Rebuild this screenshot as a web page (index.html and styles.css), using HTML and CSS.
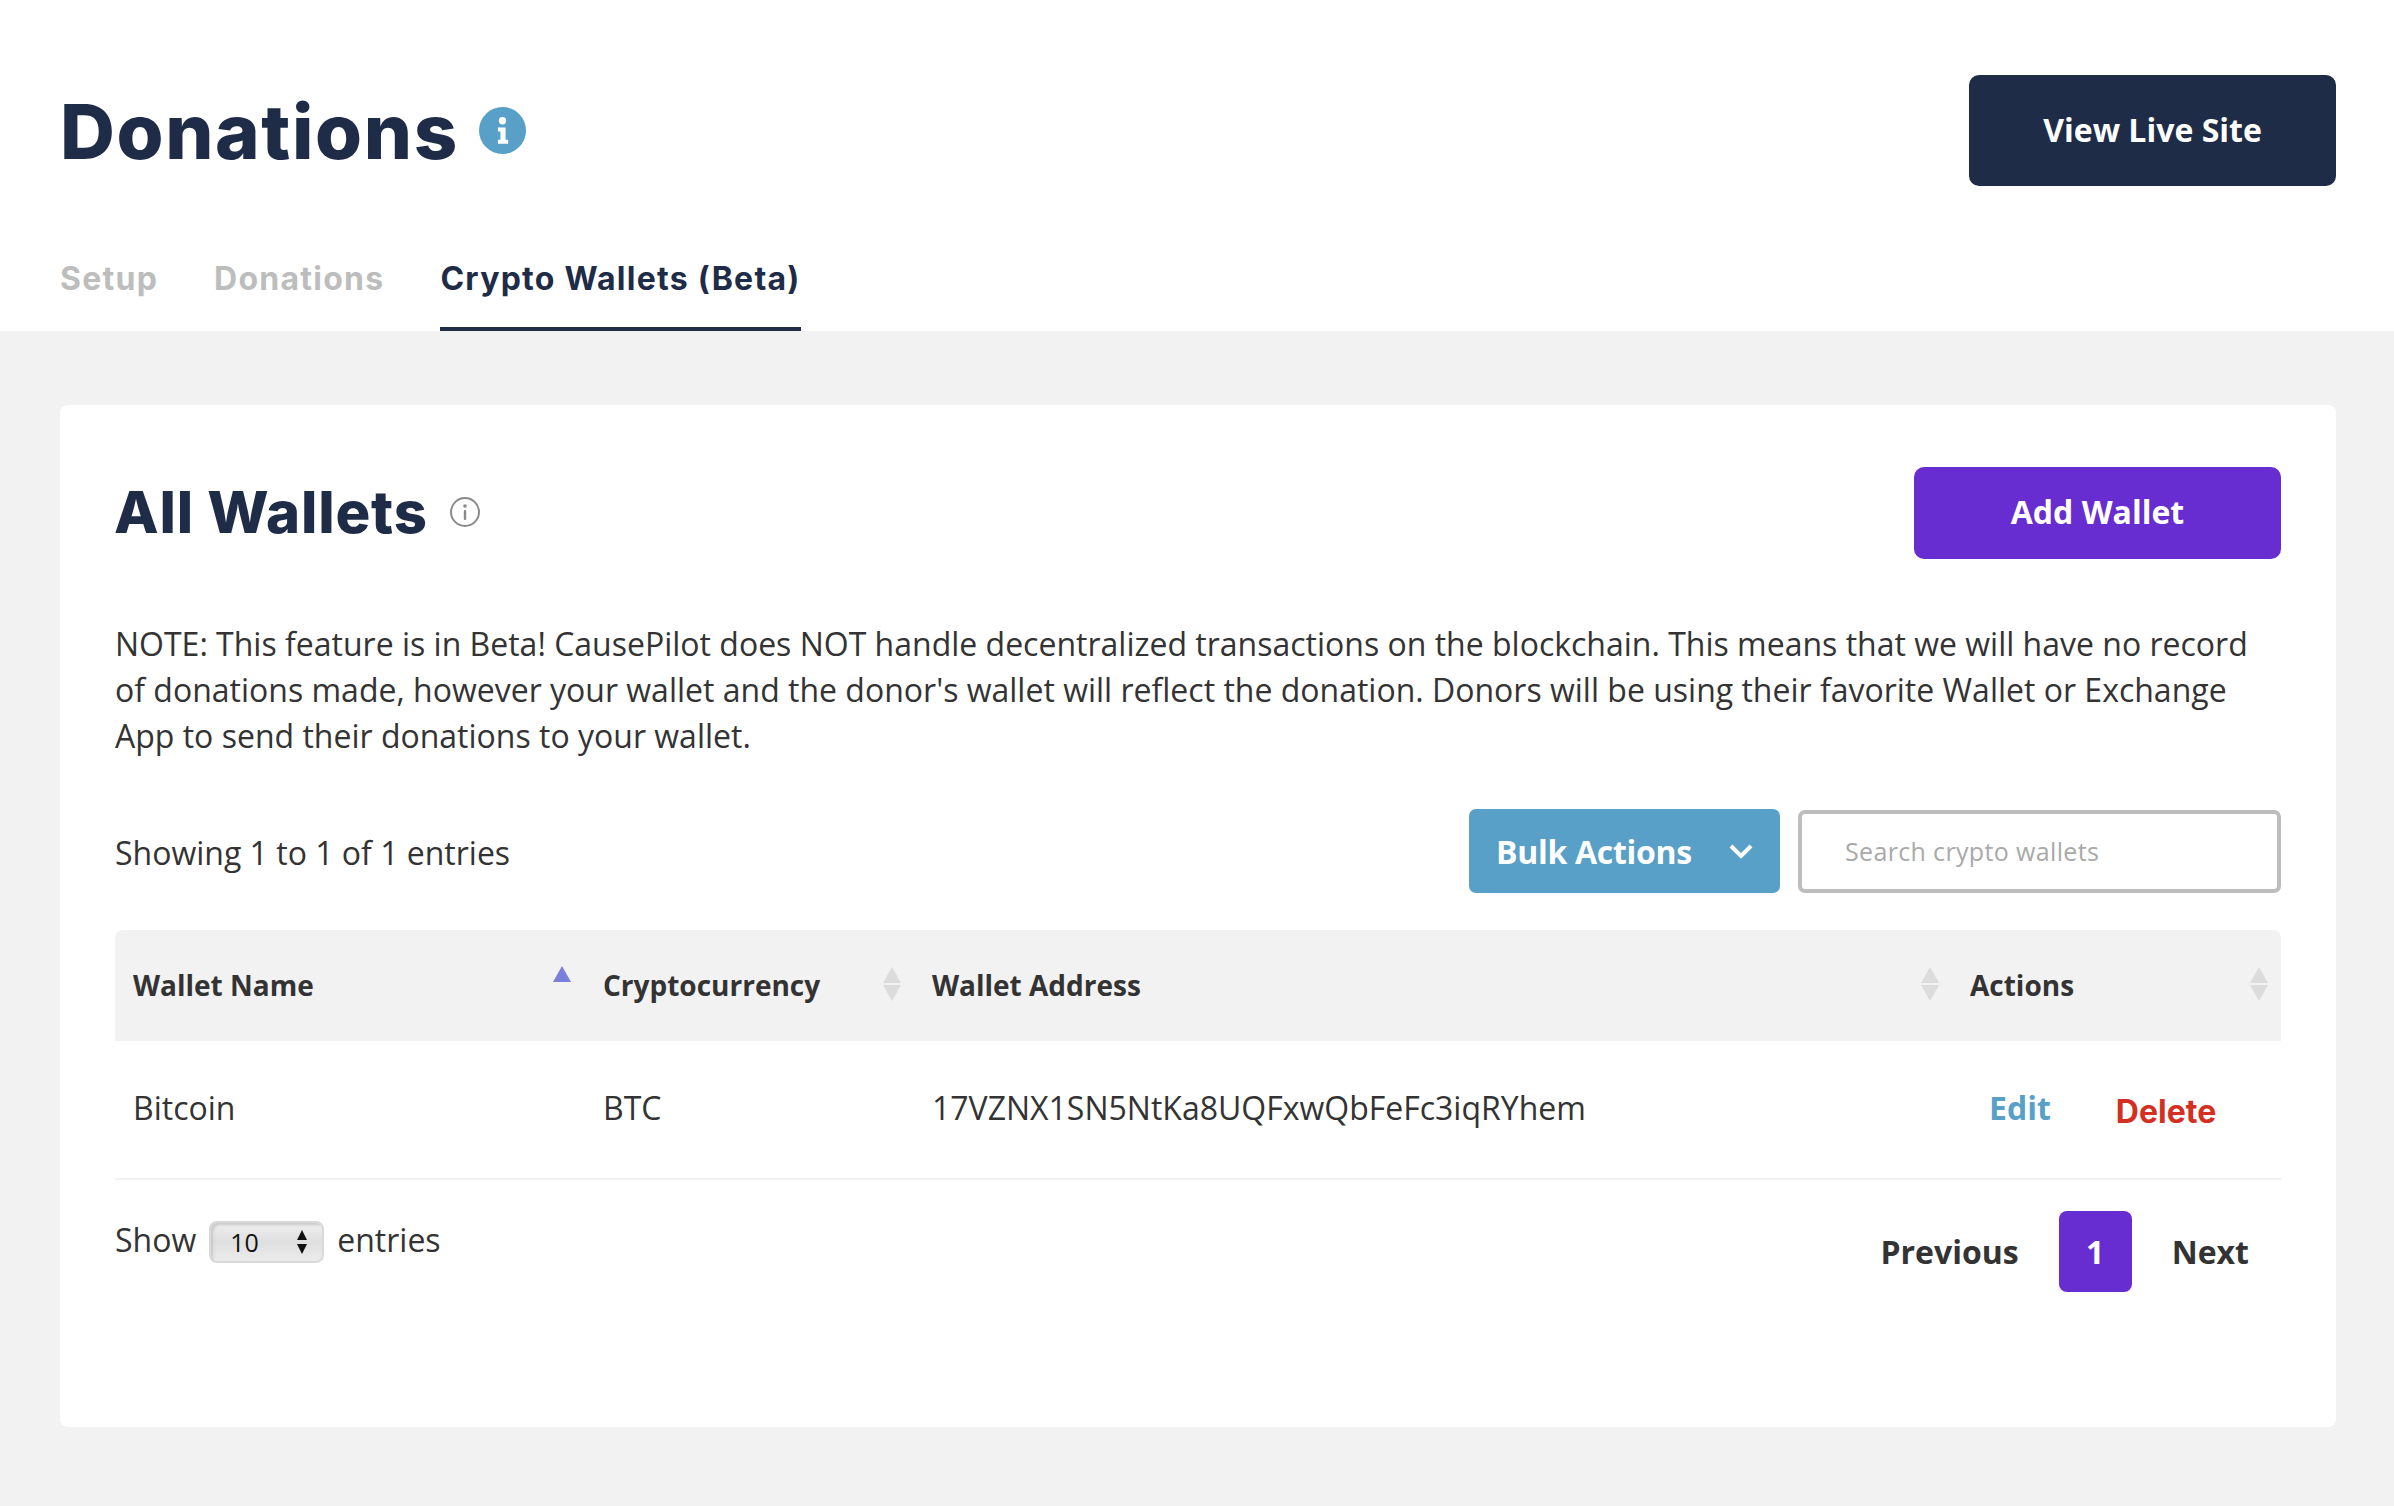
FILE: index.html
```html
<!DOCTYPE html>
<html lang="en">
<head>
<meta charset="utf-8">
<title>Donations</title>
<link rel="stylesheet" href="styles.css">
</head>
<body>
<header class="top">
  <div class="top-row">
    <div class="title-wrap">
      <h1 class="title">Donations</h1>
      <svg class="info-solid" viewBox="0 0 46 46" aria-hidden="true"><circle cx="23" cy="23" r="23" fill="#58a0c8"/><circle cx="23" cy="13.500" r="3.600" fill="#fff"/><path d="M18.500 20h7.500v12h2.500v4h-10v-4h2.500v-8h-2.500z" fill="#fff"/></svg>
    </div>
    <a class="btn-live">View Live Site</a>
  </div>
  <nav class="tabs">
    <a class="tab">Setup</a>
    <a class="tab">Donations</a>
    <a class="tab active">Crypto Wallets (Beta)</a>
  </nav>
</header>
<main class="content">
  <section class="card">
    <div class="card-head">
      <div class="title-wrap small">
        <h2 class="subtitle">All Wallets</h2>
        <svg class="info-line" viewBox="0 0 32 32" aria-hidden="true"><circle cx="16" cy="16" r="14" fill="none" stroke="#8a8a8a" stroke-width="2"/><circle cx="16" cy="10" r="1.800" fill="#8a8a8a"/><rect x="14.800" y="14" width="2.400" height="10" rx="1" fill="#8a8a8a"/></svg>
      </div>
      <a class="btn-add">Add Wallet</a>
    </div>
    <p class="note">NOTE: This feature is in Beta! CausePilot does NOT handle decentralized transactions on the blockchain. This means that we will have no record of donations made, however your wallet and the donor's wallet will reflect the donation. Donors will be using their favorite Wallet or Exchange App to send their donations to your wallet.</p>
    <div class="toolbar">
      <span class="info-text">Showing 1 to 1 of 1 entries</span>
      <div class="tools">
        <a class="btn-bulk">Bulk Actions
          <svg class="chev" viewBox="0 0 24 16" aria-hidden="true"><path d="M2 3l10 10L22 3" fill="none" stroke="#fff" stroke-width="4"/></svg>
        </a>
        <input class="search" type="text" placeholder="Search crypto wallets">
      </div>
    </div>
    <table class="wallets">
      <colgroup><col class="c1"><col class="c2"><col class="c3"><col class="c4"></colgroup>
      <thead>
        <tr>
          <th>Wallet Name<span class="sort sorted"><i class="up"></i></span></th>
          <th>Cryptocurrency<span class="sort"><i class="up"></i><i class="down"></i></span></th>
          <th>Wallet Address<span class="sort"><i class="up"></i><i class="down"></i></span></th>
          <th>Actions<span class="sort"><i class="up"></i><i class="down"></i></span></th>
        </tr>
      </thead>
      <tbody>
        <tr>
          <td>Bitcoin</td>
          <td>BTC</td>
          <td>17VZNX1SN5NtKa8UQFxwQbFeFc3iqRYhem</td>
          <td class="actions"><a class="edit">Edit</a><a class="delete">Delete</a></td>
        </tr>
      </tbody>
    </table>
    <div class="foot">
      <div class="length">
        <span>Show</span>
        <span class="select"><span class="select-val">10</span><svg class="updown" viewBox="0 0 12 26" aria-hidden="true"><path d="M6 1l5 10H1zM6 25L1 15h10z" fill="#111"/></svg></span>
        <span>entries</span>
      </div>
      <div class="pager">
        <a class="page-link">Previous</a>
        <a class="page-num">1</a>
        <a class="page-link">Next</a>
      </div>
    </div>
  </section>
</main>
</body>
</html>
```
FILE: styles.css
```css
* { box-sizing: border-box; }
html, body { margin: 0; padding: 0; }
body {
  background: #f2f2f2;
  font-family: "Open Sans", "Liberation Sans", sans-serif;
  color: #333;
  font-size: 32px;
  height: 1506px;
  overflow: hidden;
}
.top { background: #fff; height: 331px; padding: 75px 58px 0 60px; }
.top-row { display: flex; justify-content: space-between; align-items: flex-start; height: 111px; }
.title-wrap { display: flex; align-items: center; height: 111px; gap: 20px; }
.title {
  margin: 0;
  font-family: Inter, "Liberation Sans", sans-serif;
  font-weight: 800;
  font-size: 76px;
  letter-spacing: 1.600px;
  color: #1f2c47;
  line-height: 1;
}
.info-solid { width: 47px; height: 47px; }
.btn-live {
  width: 367px; height: 111px;
  display: flex; align-items: center; justify-content: center;
  padding-bottom: 3px;
  background: #1f2c47; color: #fff;
  border-radius: 10px;
  font-weight: 700; font-size: 32px;
}
.tabs { display: flex; gap: 56px; margin-top: 52px; height: 93px; }
.tab {
  font-family: Inter, "Liberation Sans", sans-serif;
  font-weight: 700;
  font-size: 32px;
  letter-spacing: 1.250px;
  color: #bdbdbd;
  line-height: 76px;
  height: 93px;
  padding-top: 3px;
}
.tab.active { color: #1f2c47; border-bottom: 4px solid #1f2c47; }
.content { padding: 74px 58px 0 60px; }
.card {
  background: #fff;
  border-radius: 8px;
  height: 1022px;
  padding: 62px 55px 0;
}
.card-head { display: flex; justify-content: space-between; align-items: center; height: 92px; }
.title-wrap.small { height: 92px; gap: 21px; padding-bottom: 3px; margin-left: -1px; }
.subtitle {
  margin: 0;
  font-family: Inter, "Liberation Sans", sans-serif;
  font-weight: 800;
  font-size: 58px;
  letter-spacing: 0.800px;
  line-height: 1;
  color: #1f2c47;
}
.info-line { width: 32px; height: 32px; }
.btn-add {
  width: 367px; height: 92px;
  display: flex; align-items: center; justify-content: center;
  padding-bottom: 3px;
  background: #672dd1; color: #fff;
  border-radius: 10px;
  font-weight: 700; font-size: 32px;
}
.note { margin: 62px 0 0; font-size: 32px; line-height: 46px; color: #333; }
.toolbar { display: flex; justify-content: space-between; align-items: center; margin-top: 50px; height: 84px; }
.info-text { position: relative; top: 1px; }
.tools { display: flex; gap: 18px; align-items: center; }
.btn-bulk {
  width: 311px; height: 84px;
  display: flex; align-items: center; justify-content: space-between;
  padding: 0 27px;
  background: #58a0c8; color: #fff;
  border-radius: 7px;
  font-weight: 700; font-size: 32px;
  letter-spacing: -0.300px;
}
.chev { width: 24px; height: 16px; }
.search {
  width: 483px; height: 83px;
  border: 4px solid #bdbdbd;
  border-radius: 7px;
  padding: 0 43px;
  font-family: "Open Sans", "Liberation Sans", sans-serif;
  font-size: 25px;
  letter-spacing: 0.350px;
  outline: none;
  background: #fff;
}
.search::placeholder { color: #a9a9a9; opacity: 1; }
.wallets { width: 2166px; table-layout: fixed; border-collapse: separate; border-spacing: 0; margin-top: 37px; }
.c1 { width: 470px; } .c2 { width: 329px; } .c3 { width: 1038px; } .c4 { width: 329px; }
.wallets th {
  position: relative;
  height: 111px;
  padding: 0 18px 2px;
  background: #f2f2f2;
  text-align: left;
  font-weight: 700;
  font-size: 28px;
  color: #333;
}
.wallets th:first-child { border-top-left-radius: 8px; }
.wallets th:last-child { border-top-right-radius: 8px; }
.wallets td {
  height: 139px;
  padding: 0 18px 4px;
  font-size: 32px;
  color: #333;
  border-bottom: 2px solid #f2f2f2;
}
.sort { position: absolute; right: 13px; top: 37px; display: flex; flex-direction: column; gap: 2px; width: 18px; }
.sort i { display: block; width: 0; height: 0; border-left: 9px solid transparent; border-right: 9px solid transparent; }
.sort .up { border-bottom: 16px solid #dcdcdc; }
.sort .down { border-top: 16px solid #dcdcdc; }
.sort.sorted { top: 36px; right: 14px; }
.sort.sorted .up { border-bottom-color: #7b7fdc; }
.wallets td.actions { padding: 0 0 0 37px; font-weight: 700; white-space: nowrap; }
.edit { color: #58a0c8; display: inline-block; margin-right: 65px; position: relative; top: -2px; }
.delete { color: #d32f22; font-family: Inter, "Liberation Sans", sans-serif; font-weight: 700; display: inline-block; position: relative; top: 1px; }
.foot { display: flex; justify-content: space-between; align-items: flex-start; padding-top: 31px; }
.length { display: flex; align-items: center; gap: 13px; height: 62px; }
.length > span:not(.select) { position: relative; top: -3px; }
.select {
  width: 115px; height: 42px;
  display: flex; align-items: center; justify-content: space-between;
  padding: 0 14px 0 19px;
  border: 2px solid #d9d9d9;
  border-radius: 8px;
  background: linear-gradient(#efefef, #dfdfdf 50%, #ececec);
  box-shadow: inset 3px 3px 3px -1px #c8c8c8;
  font-size: 25px;
  color: #111;
}
.updown { width: 12px; height: 26px; }
.pager { display: flex; align-items: center; margin-right: 32px; height: 81px; gap: 40px; }
.page-link { font-weight: 700; font-size: 32px; color: #333; }
.page-num {
  width: 73px; height: 81px;
  display: flex; align-items: center; justify-content: center;
  background: #672dd1; color: #fff;
  border-radius: 8px;
  font-weight: 700; font-size: 32px;
}
```
